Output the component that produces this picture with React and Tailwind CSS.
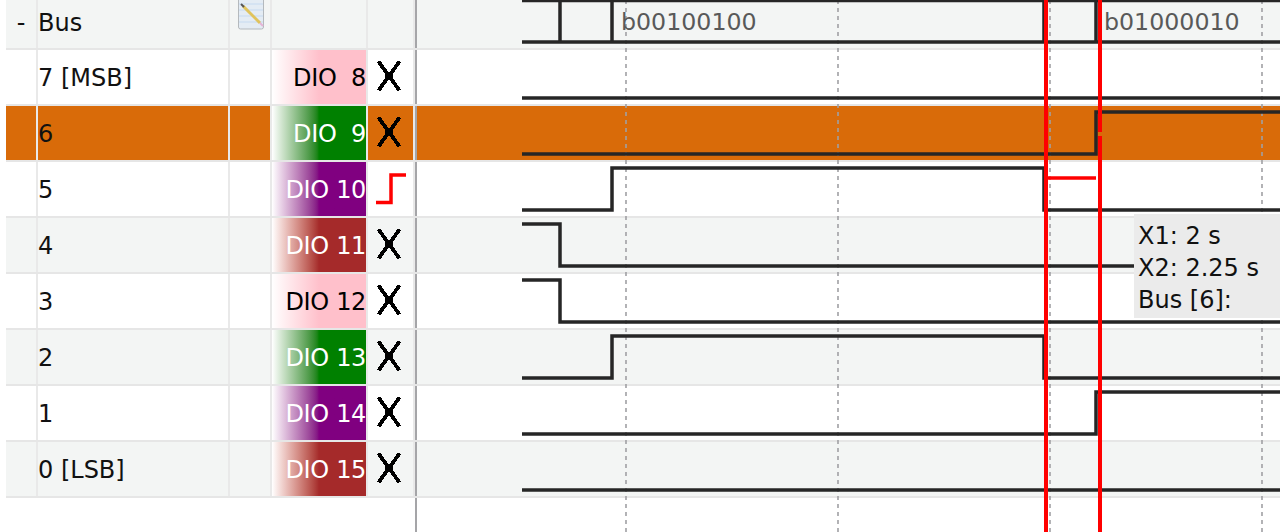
const FONT = { fontFamily: '"DejaVu Sans", "Open Sans", sans-serif' };

const rows = [
  { name: "7 [MSB]", dio: "DIO  8", bg: "from-white to-[#ffc0cb]", text: "text-black", alt: false },
  { name: "6", dio: "DIO  9", bg: "from-white to-[#008000]", text: "text-white", selected: true },
  { name: "5", dio: "DIO 10", bg: "from-white to-[#800080]", text: "text-white", alt: false, step: true },
  { name: "4", dio: "DIO 11", bg: "from-white to-[#a52a2a]", text: "text-white", alt: true },
  { name: "3", dio: "DIO 12", bg: "from-white to-[#ffc0cb]", text: "text-black", alt: false },
  { name: "2", dio: "DIO 13", bg: "from-white to-[#008000]", text: "text-white", alt: true },
  { name: "1", dio: "DIO 14", bg: "from-white to-[#800080]", text: "text-white", alt: false },
  { name: "0 [LSB]", dio: "DIO 15", bg: "from-white to-[#a52a2a]", text: "text-white", alt: true },
];

function XIcon() {
  return (
    <svg className="mr-[3px] mb-[2px]" width="24" height="32" viewBox="0 0 24 32" shapeRendering="crispEdges">
      <path d="M1.5 1.5 L22.5 30.5 M22.5 1.5 L1.5 30.5" stroke="#000" strokeWidth="3.8" fill="none" />
      <rect x="8" y="12" width="8" height="8" fill="#000" />
    </svg>
  );
}

function StepIcon() {
  return (
    <svg width="30" height="32" viewBox="0 0 30 32">
      <path d="M0 29.5 H15 V2 H30" stroke="#ff0000" strokeWidth="3.5" fill="none" />
    </svg>
  );
}

function NoteIcon() {
  return (
    <svg width="26" height="30" viewBox="0 0 26 30">
      <rect x="0.5" y="-3" width="25" height="32" rx="2" fill="#e4ecf4" stroke="#b4b9bd" strokeWidth="1" />
      <path d="M1 4 H25 M1 10 H25 M1 16 H25 M1 22 H25" stroke="#c6daf0" strokeWidth="1" />
      <path d="M5 6 L22 23" stroke="#e0c35c" strokeWidth="3" />
      <path d="M3 4 L6 7" stroke="#555" strokeWidth="2" />
      <path d="M22 23 L25 26" stroke="#e4b4d4" strokeWidth="2" />
    </svg>
  );
}

function Row({ r }) {
  const rowBg = r.selected ? "bg-[#d96b09]" : r.alt ? "bg-[#f3f5f4]" : "bg-white";
  const sep = "border-r-2 border-[#e9e9e9]";
  return (
    <div className="flex h-[56px] border-b-2 border-[#e6e6e6]">
      <div className={`w-[32px] h-full ${sep} ${rowBg}`} />
      <div className={`w-[192px] h-full flex items-center pt-[2px] text-2xl text-[#111] ${sep} ${rowBg} whitespace-pre`}>{r.name}</div>
      <div className={`w-[42px] h-full ${sep} ${rowBg}`} />
      <div className={`w-[96px] h-full flex items-center justify-end pt-[2px] text-2xl tracking-[-0.35px] bg-gradient-to-r to-50% ${r.bg} ${r.text} border-r-2 border-[#e9e9e9] whitespace-pre`}>{r.dio}</div>
      <div className={`w-[47px] h-full flex items-center justify-center ${sep} ${rowBg}`}>
        {r.step ? <StepIcon /> : <XIcon />}
      </div>
      <div className={`flex-1 h-full border-l-2 border-[#a5a5a8] ${rowBg}`} />
    </div>
  );
}

function Waves() {
  const paths = [
    "M522 0.5 H1280",
    "M522 42 H1280 M560 0 V42 M612 0 V42 M1044 0 V42 M1096 0 V42",
    "M522 98 H1280",
    "M522 154 H1096 V112 H1280",
    "M522 210 H612 V168 H1044 V210 H1280",
    "M522 224 H560 V266 H1136",
    "M522 280 H560 V322 H1280",
    "M522 378 H612 V336 H1044 V378 H1280",
    "M522 434 H1096 V392 H1280",
    "M522 490 H1280",
  ];
  return (
    <svg className="absolute left-0 top-0" width="1280" height="532" viewBox="0 0 1280 532">
      {[626, 838, 1050, 1262].map((x) => (
        <line key={x} x1={x} x2={x} y1="0" y2="532" stroke="#a0a0a4" strokeWidth="1.6" strokeDasharray="4 4" />
      ))}
      {paths.map((d, i) => (
        <path key={i} d={d} fill="none" stroke="#262626" strokeWidth="3.5" />
      ))}
      <text x="621" y="29.5" fontSize="23.7" fill="#595959" style={FONT}>b00100100</text>
      <text x="1104" y="29.5" fontSize="23.7" fill="#595959" style={FONT}>b01000010</text>
      <path d="M1046 0 V532 M1100 0 V132 M1100 136 V532" stroke="#ff0000" strokeWidth="4" fill="none" />
      <path d="M1048 178 H1096" stroke="#ff0000" strokeWidth="3.5" fill="none" />
    </svg>
  );
}

export default function App() {
  return (
    <div className="relative w-[1280px] h-[532px] overflow-hidden bg-white" style={FONT}>
      <div className="pl-[6px]">
        <div className="flex h-[50px] border-b-2 border-[#e6e6e6] bg-[#f3f5f4]">
          <div className="w-[32px] h-full border-r-2 border-[#e9e9e9] flex items-center justify-center text-2xl text-[#111] pb-0.5">-</div>
          <div className="w-[192px] h-full border-r-2 border-[#e9e9e9] flex items-center text-2xl text-[#111] pb-0.5">Bus</div>
          <div className="w-[42px] h-full border-r-2 border-[#e9e9e9] pl-2">
            <NoteIcon />
          </div>
          <div className="w-[96px] h-full border-r-2 border-[#e9e9e9]" />
          <div className="w-[47px] h-full border-r-2 border-[#e9e9e9]" />
          <div className="flex-1 h-full border-l-2 border-[#a5a5a8]" />
        </div>
        {rows.map((r) => (
          <Row key={r.name} r={r} />
        ))}
        <div className="ml-[409px] h-[34px] border-l-2 border-[#a5a5a8]" />
      </div>
      <Waves />
      <div className="absolute left-[1134px] top-[214px] w-[146px] h-[104px] bg-[#ebebeb] pl-1 pt-1.5 text-2xl leading-[32px] text-[#111]">
        <div>X1: 2 s</div>
        <div>X2: 2.25 s</div>
        <div>Bus [6]:</div>
      </div>
    </div>
  );
}
